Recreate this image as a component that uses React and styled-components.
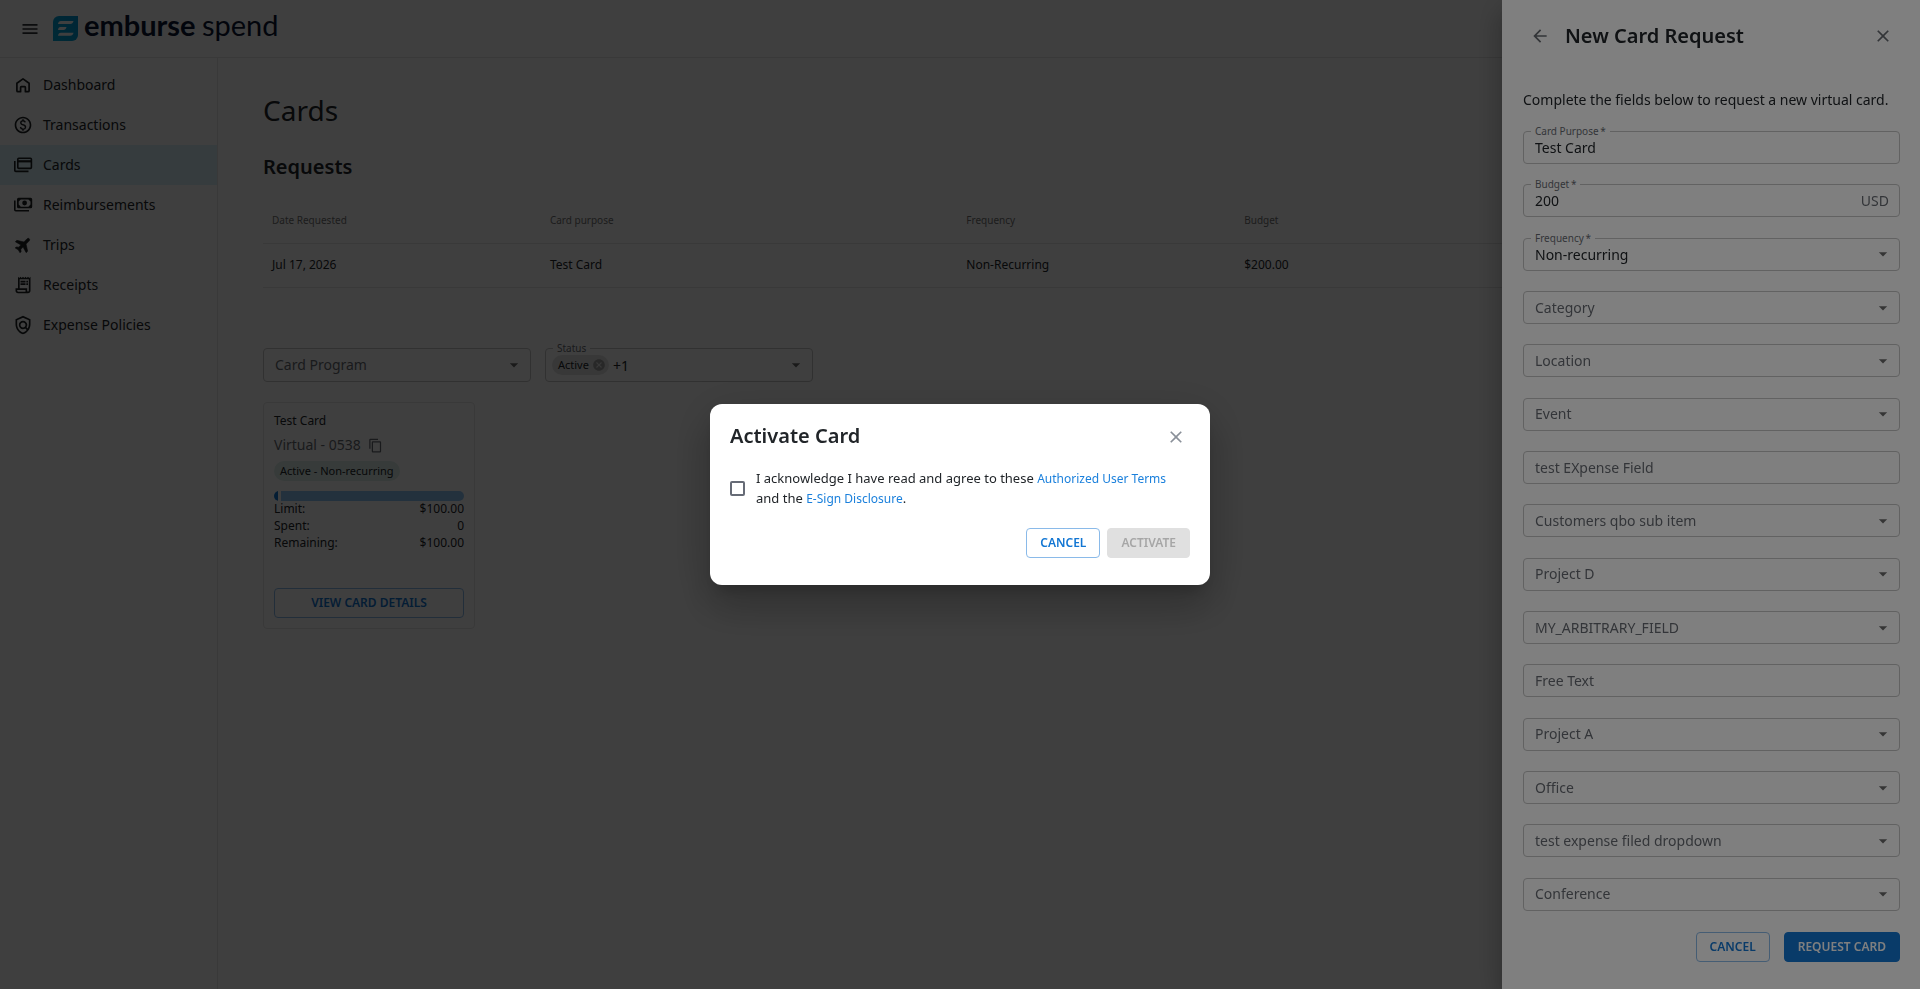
import React from "react";
import styled, { createGlobalStyle, css } from "styled-components";
import {
  MdArrowBack,
  MdCancel,
  MdClose,
  MdContentCopy,
  MdMenu,
  MdOutlinePaid,
  MdOutlinePolicy,
  MdOutlineReceiptLong,
} from "react-icons/md";

const blue = "#1276d3";
const blueBorder = "#8abae9";
const ink = "#212529";
const muted = "#676b72";
const line = "#e6e6e6";
const outline = "#c4c4c4";

const GlobalStyle = createGlobalStyle`
  *, *::before, *::after { box-sizing: border-box; }
  body {
    margin: 0;
    background: #fff;
    color: ${ink};
    font-family: "Noto Sans", "Liberation Sans", sans-serif;
    font-size: 14px;
  }
  button, input, select { font: inherit; color: inherit; }
  button { cursor: pointer; }
`;

/* ---------- shared parts ---------- */

const Button = styled.button`
  display: inline-flex;
  align-items: center;
  justify-content: center;
  height: 30px;
  padding: 0 13px;
  border: 1px solid ${blueBorder};
  border-radius: 4px;
  background: transparent;
  color: ${blue};
  font-size: 12px;
  font-weight: 600;
  line-height: 18px;
  text-transform: uppercase;
  white-space: nowrap;

  ${(p) =>
    p.$variant === "filled" &&
    css`
      border-color: ${blue};
      background: ${blue};
      color: #fff;
    `}

  &:disabled {
    border-color: #e0e0e0;
    background: #e0e0e0;
    color: #a6a6a6;
    cursor: default;
  }
`;

const IconButton = styled.button`
  display: inline-flex;
  align-items: center;
  justify-content: center;
  flex: none;
  width: ${(p) => p.$width || "28px"};
  height: 30px;
  padding: 0;
  border: 0;
  background: none;
  color: ${(p) => p.$color || ink};
  font-size: ${(p) => p.$size || "20px"};
`;

/* ---------- header ---------- */

const Page = styled.div`
  display: flex;
  flex-direction: column;
  min-height: 100vh;
`;

const Header = styled.header`
  display: flex;
  align-items: center;
  gap: 13px;
  height: 58px;
  padding: 0 20px;
  border-bottom: 1px solid ${line};
`;

const LogoLink = styled.a`
  display: flex;
  text-decoration: none;
`;

const LogoSvg = styled.svg`
  display: block;
  font-family: Lato, "Open Sans", sans-serif;
  font-size: 29px;
`;

function Logo() {
  return (
    <LogoLink href="#home" aria-label="emburse spend">
      <LogoSvg width="240" height="51" viewBox="0 0 240 51">
        <defs>
          <linearGradient id="mark" x1="0" y1="1" x2="1" y2="0">
            <stop offset="0" stopColor="#00a8d8" />
            <stop offset="1" stopColor="#0096d4" />
          </linearGradient>
        </defs>
        <path d="M6 13h19v19a6 6 0 0 1-6 6H0V19a6 6 0 0 1 6-6Z" fill="url(#mark)" />
        <g fill="#fff">
          <path d="M8 18h12.5c-.4 2-1.600 3-3.200 3H5c.2-2 1.300-3 3-3Z" />
          <path d="M7.500 23.900H13.500c-.4 2-1.500 3-3.100 3H5c.2-2 1-3 2.500-3Z" />
          <path d="M8 29.700h12.500c-.4 2-1.600 3-3.200 3H5c.2-2 1.300-3 3-3Z" />
        </g>
        <text x="31" y="33" fill="#0b1533" fontWeight="700">emburse</text>
        <text x="149" y="33" fill="#0b1533">spend</text>
      </LogoSvg>
    </LogoLink>
  );
}

/* ---------- sidebar ---------- */

const Body = styled.div`
  display: flex;
  flex: 1;
`;

const Sidebar = styled.nav`
  flex: none;
  width: 218px;
  padding-top: 7px;
  border-right: 1px solid ${line};
`;

const NavLink = styled.a`
  display: flex;
  align-items: center;
  gap: 10px;
  height: 40px;
  padding: 0 13px 1px;
  background: ${(p) => (p.$active ? "#d9f0f8" : "transparent")};
  color: ${ink};
  line-height: 20px;
  text-decoration: none;

  svg {
    flex: none;
    width: 20px;
    height: 20px;
    color: #1c2023;
  }
`;

function HomeIcon() {
  return (
    <svg viewBox="0 0 20 20" fill="none" stroke="currentColor" strokeWidth="1.7" strokeLinejoin="round">
      <path d="M3.900 8.300 10 3.900l6.100 4.400v7.400q0 1-1 1h-2.700v-4.300q0-.7-.7-.7H8.300q-.7 0-.7.7v4.300H4.900q-1 0-1-1Z" />
    </svg>
  );
}

function CardsIcon() {
  return (
    <svg viewBox="0 0 20 20" fill="none" stroke="currentColor" strokeWidth="1.600">
      <rect x="4.800" y="3.200" width="13.600" height="10.200" rx="1" />
      <path d="M5 6.300h13.200" strokeWidth="2.200" />
      <path d="M1.800 6v9.400q0 1 1 1h12.700" />
    </svg>
  );
}

function BanknotesIcon() {
  return (
    <svg viewBox="0 0 20 20" fill="none" stroke="currentColor" strokeWidth="1.600">
      <path
        d="M5.500 2.700h12.200q1.500 0 1.500 1.500v7.600q0 1.500-1.500 1.500H5.500Q4 13.300 4 11.800V4.200q0-1.500 1.500-1.500Zm2.300 1.700L5.700 6.400v3.200l2.100 2.100h7.600l2.100-2.100V6.400l-2.100-2Z"
        fill="currentColor"
        fillRule="evenodd"
        stroke="none"
      />
      <circle cx="11.600" cy="8" r="2.400" fill="currentColor" stroke="none" />
      <path d="M1.800 5.600v9.200q0 1 1 1h13.200" />
    </svg>
  );
}

function PlaneIcon() {
  return (
    <svg viewBox="0 0 20 20" fill="currentColor">
      <path
        d="M10 .2c1.100 0 1.700.9 1.700 2v4.700l6.800 4.300v2.300l-6.800-1.900v3.500l2.100 1.700v1.700L10 17.500l-3.800 1v-1.700l2.100-1.700v-3.500l-6.800 1.900v-2.300l6.800-4.300V2.200c0-1.100.6-2 1.700-2Z"
        stroke="currentColor"
        strokeWidth=".6"
        strokeLinejoin="round"
        transform="rotate(45 10 10) translate(1 1) scale(.9)"
      />
    </svg>
  );
}

const navItems = [
  { label: "Dashboard", Icon: HomeIcon },
  { label: "Transactions", Icon: MdOutlinePaid },
  { label: "Cards", Icon: CardsIcon, active: true },
  { label: "Reimbursements", Icon: BanknotesIcon },
  { label: "Trips", Icon: PlaneIcon },
  { label: "Receipts", Icon: MdOutlineReceiptLong },
  { label: "Expense Policies", Icon: MdOutlinePolicy },
];

/* ---------- main content ---------- */

const Main = styled.main`
  flex: 1;
  min-width: 0;
  padding: 33px 46px 46px 45px;
`;

const PageTitle = styled.h1`
  margin: 0 0 24px;
  font-size: 28px;
  font-weight: 400;
  line-height: 38px;
`;

const SectionTitle = styled.h2`
  margin: 0 0 19px;
  font-size: 20px;
  font-weight: 600;
  line-height: 27px;
`;

const Table = styled.table`
  width: 100%;
  margin-bottom: 60px;
  border-collapse: separate;
  border-spacing: 0;
  table-layout: fixed;
`;

const Col = styled.col`
  width: ${(p) => p.$width || "auto"};
`;

const HeadCell = styled.th`
  height: 45px;
  padding: 0 9px 2px;
  border-bottom: 1px solid ${line};
  color: #737373;
  font-size: 10px;
  font-weight: 400;
  text-align: left;
`;

const Cell = styled.td`
  height: 44px;
  padding: 0 9px 2px;
  border-bottom: 1px solid ${line};
  font-size: 12px;
`;

const Filters = styled.div`
  display: flex;
  gap: 14px;
  margin-bottom: 20px;
`;

const Chip = styled.span`
  display: inline-flex;
  align-items: center;
  gap: 3px;
  height: 20px;
  padding: 0 ${(p) => (p.$removable ? "3px" : "6px")} 0 6px;
  border-radius: 10px;
  background: ${(p) => (p.$removable ? "#e3e3e3" : "#dcefea")};
  font-size: 11px;
  line-height: 16px;
`;

const CardTile = styled.article`
  display: flex;
  flex-direction: column;
  align-items: flex-start;
  width: 212px;
  padding: 9px 10px 10px;
  border: 1px solid ${line};
  border-radius: 4px;
`;

const CardName = styled.h3`
  margin: 0 0 5px;
  font-size: 12px;
  font-weight: 400;
  line-height: 18px;
`;

const CardNumber = styled.div`
  display: flex;
  align-items: center;
  gap: 1px;
  height: 20px;
  margin-bottom: 6px;
  color: ${muted};
  line-height: 20px;
`;

const UsageBar = styled.div`
  display: flex;
  gap: 3px;
  align-self: stretch;
  height: 10px;
  margin-top: 10px;
  border-radius: 5px;
  overflow: hidden;

  &::before {
    content: "";
    width: 4px;
    background: ${blue};
  }

  &::after {
    content: "";
    flex: 1;
    background: #8fc4f5;
  }
`;

const Amounts = styled.dl`
  display: grid;
  grid-template-columns: auto auto;
  row-gap: 2px;
  justify-content: space-between;
  align-self: stretch;
  margin: 0 0 38px;
  font-size: 12px;
  line-height: 15px;

  dt, dd { margin: 0; }
  dd { text-align: right; }
`;

const DetailsButton = styled(Button)`
  align-self: stretch;
`;

/* ---------- outlined form fields ---------- */

const FieldBox = styled.div`
  position: relative;
  display: flex;
  align-items: center;
  flex: none;
  width: ${(p) => p.$width || "100%"};
  height: ${(p) => p.$height || "33px"};
  border: 1px solid ${outline};
  border-radius: 4px;
`;

const FieldLabel = styled.label`
  position: absolute;
  left: 11px;
  color: ${muted};
  line-height: 20px;
  pointer-events: none;

  ${(p) =>
    p.$floating &&
    css`
      top: -8px;
      left: 7px;
      padding: 0 4px;
      background: #fff;
      font-size: 10px;
      line-height: 14px;
    `}
`;

const controlStyle = css`
  flex: 1;
  min-width: 0;
  height: 100%;
  padding: 0 11px;
  border: 0;
  outline: 0;
  background: transparent;
  appearance: none;
  font-size: 14px;
`;

const TextInput = styled.input`
  ${controlStyle}
`;

const Select = styled.select`
  ${controlStyle}
  padding-right: 30px;
`;

const Arrow = styled.svg`
  position: absolute;
  right: 6px;
  width: 20px;
  height: 20px;
  fill: #6b6b6b;
  pointer-events: none;
`;

const Adornment = styled.span`
  padding-right: 10px;
  color: ${muted};
`;

const ArrowIcon = () => (
  <Arrow viewBox="0 0 24 24">
    <path d="M7 10l5 5 5-5z" />
  </Arrow>
);

const Selected = styled.div`
  display: flex;
  align-items: center;
  gap: 4px;
  padding-left: 6px;
`;

function Field({ id, label, value, kind = "select", required, suffix, width, height }) {
  return (
    <FieldBox $width={width} $height={height}>
      {kind === "select" ? (
        <Select id={id} defaultValue={value || ""} required={required}>
          <option value="" aria-label="None" />
          {value && <option>{value}</option>}
        </Select>
      ) : (
        <TextInput id={id} defaultValue={value || ""} required={required} />
      )}
      {suffix && <Adornment>{suffix}</Adornment>}
      <FieldLabel htmlFor={id} $floating={Boolean(value)}>
        {label}
        {required && "\u2009*"}
      </FieldLabel>
      {kind === "select" && <ArrowIcon />}
    </FieldBox>
  );
}

/* ---------- drawer ---------- */

const Backdrop = styled.div`
  position: fixed;
  inset: 0;
  background: rgba(0, 0, 0, 0.5);
`;

const Drawer = styled.aside`
  position: fixed;
  top: 0;
  right: 0;
  bottom: 0;
  display: flex;
  flex-direction: column;
  width: 418px;
  max-width: 100%;
  padding: 21px 20px 27px 21px;
  overflow-y: auto;
  background: #fff;
  box-shadow:
    0 8px 10px -5px rgba(0, 0, 0, 0.2),
    0 16px 24px 2px rgba(0, 0, 0, 0.14),
    0 6px 30px 5px rgba(0, 0, 0, 0.12);
`;

const DrawerHeader = styled.header`
  display: flex;
  align-items: center;
  gap: 8px;
  margin-bottom: 39px;
`;

const PanelTitle = styled.h2`
  flex: 1;
  margin: 0;
  font-size: 20px;
  font-weight: 600;
  line-height: 28px;
`;

const Intro = styled.p`
  margin: 0 0 21px;
  line-height: 20px;
`;

const Fields = styled.div`
  display: flex;
  flex: 1 0 auto;
  flex-direction: column;
  justify-content: space-between;
  gap: 16px;
`;

const DrawerFooter = styled.footer`
  display: flex;
  justify-content: flex-end;
  gap: 14px;
  margin-top: 21px;
`;

const requestFields = [
  { label: "Card Purpose", value: "Test Card", kind: "text", required: true },
  { label: "Budget", value: "200", kind: "text", required: true, suffix: "USD" },
  { label: "Frequency", value: "Non-recurring", required: true },
  { label: "Category" },
  { label: "Location" },
  { label: "Event" },
  { label: "test EXpense Field", kind: "text" },
  { label: "Customers qbo sub item" },
  { label: "Project D" },
  { label: "MY_ARBITRARY_FIELD" },
  { label: "Free Text", kind: "text" },
  { label: "Project A" },
  { label: "Office" },
  { label: "test expense filed dropdown" },
  { label: "Conference" },
];

/* ---------- dialog ---------- */

const ModalLayer = styled(Backdrop)`
  display: flex;
  align-items: center;
  justify-content: center;
  padding: 20px;
`;

const Modal = styled.section`
  width: 500px;
  max-width: 100%;
  padding: 18px 20px 27px;
  border-radius: 12px;
  background: #fff;
  box-shadow:
    0 11px 15px -7px rgba(0, 0, 0, 0.2),
    0 24px 38px 3px rgba(0, 0, 0, 0.14),
    0 9px 46px 8px rgba(0, 0, 0, 0.12);
`;

const ModalHeader = styled.header`
  display: flex;
  align-items: flex-start;
  margin-bottom: 16px;
`;

const Acknowledge = styled.div`
  display: flex;
  align-items: center;
  gap: 11px;
  margin-bottom: 20px;
  font-size: 13px;
  line-height: 20px;
`;

const Checkbox = styled.input`
  flex: none;
  width: 15px;
  height: 15px;
  margin: 0;
  border: 2px solid #666b76;
  border-radius: 2px;
  background: #fff;
  appearance: none;

  &:checked { background: ${blue}; }
`;

const TermsLabel = styled.label`
  flex: 1;
  padding-right: 20px;
`;

const TextLink = styled.a`
  color: #1b80dc;
  font-size: 12px;
  line-height: 16px;
  text-decoration: none;
`;

const ModalActions = styled.footer`
  display: flex;
  justify-content: flex-end;
  gap: 7px;
`;

/* ---------- app ---------- */

export default function App() {
  return (
    <>
      <GlobalStyle />
      <Page>
        <Header>
          <IconButton aria-label="Menu" $width="20px" $color="#2c3035">
            <MdMenu />
          </IconButton>
          <Logo />
        </Header>
        <Body>
          <Sidebar>
            {navItems.map(({ label, Icon, active }) => (
              <NavLink key={label} href={`#${label}`} $active={active}>
                <Icon />
                {label}
              </NavLink>
            ))}
          </Sidebar>
          <Main>
            <PageTitle>Cards</PageTitle>
            <SectionTitle>Requests</SectionTitle>
            <Table>
              <colgroup>
                <Col $width="17.25%" />
                <Col $width="25.85%" />
                <Col $width="17.25%" />
                <Col />
              </colgroup>
              <thead>
                <tr>
                  <HeadCell>Date Requested</HeadCell>
                  <HeadCell>Card purpose</HeadCell>
                  <HeadCell>Frequency</HeadCell>
                  <HeadCell>Budget</HeadCell>
                </tr>
              </thead>
              <tbody>
                <tr>
                  <Cell>Jul 17, 2026</Cell>
                  <Cell>Test Card</Cell>
                  <Cell>Non-Recurring</Cell>
                  <Cell>$200.00</Cell>
                </tr>
              </tbody>
            </Table>

            <Filters>
              <Field id="card-program" label="Card Program" width="268px" height="34px" />
              <FieldBox $width="268px" $height="34px">
                <Selected>
                  <Chip $removable>
                    Active
                    <IconButton aria-label="Remove Active" $width="14px" $size="14px" $color="#a3a3a3">
                      <MdCancel />
                    </IconButton>
                  </Chip>
                  +1
                </Selected>
                <TextInput id="status" role="combobox" aria-expanded="false" />
                <FieldLabel htmlFor="status" $floating>
                  Status
                </FieldLabel>
                <ArrowIcon />
              </FieldBox>
            </Filters>

            <CardTile>
              <CardName>Test Card</CardName>
              <CardNumber>
                Virtual - 0538
                <IconButton aria-label="Copy card number" $size="15px" $color={muted}>
                  <MdContentCopy />
                </IconButton>
              </CardNumber>
              <Chip>Active - Non-recurring</Chip>
              <UsageBar />
              <Amounts>
                <dt>Limit:</dt>
                <dd>$100.00</dd>
                <dt>Spent:</dt>
                <dd>0</dd>
                <dt>Remaining:</dt>
                <dd>$100.00</dd>
              </Amounts>
              <DetailsButton>View Card Details</DetailsButton>
            </CardTile>
          </Main>
        </Body>
      </Page>

      <Backdrop />
      <Drawer aria-label="New Card Request">
        <DrawerHeader>
          <IconButton aria-label="Back" $width="34px" $color="#666a70">
            <MdArrowBack />
          </IconButton>
          <PanelTitle>New Card Request</PanelTitle>
          <IconButton aria-label="Close" $width="34px" $color="#666a70">
            <MdClose />
          </IconButton>
        </DrawerHeader>
        <Intro>Complete the fields below to request a new virtual card.</Intro>
        <Fields>
          {requestFields.map((field, i) => (
            <Field key={field.label} id={`request-field-${i}`} {...field} />
          ))}
        </Fields>
        <DrawerFooter>
          <Button>Cancel</Button>
          <Button $variant="filled">Request Card</Button>
        </DrawerFooter>
      </Drawer>

      <ModalLayer>
        <Modal role="dialog" aria-modal="true" aria-labelledby="activate-title">
          <ModalHeader>
            <PanelTitle id="activate-title">Activate Card</PanelTitle>
            <IconButton aria-label="Close dialog" $color="#8a9099">
              <MdClose />
            </IconButton>
          </ModalHeader>
          <Acknowledge>
            <Checkbox type="checkbox" id="acknowledge" />
            <TermsLabel htmlFor="acknowledge">
              I acknowledge I have read and agree to these{" "}
              <TextLink href="#terms">Authorized User Terms</TextLink> and the{" "}
              <TextLink href="#disclosure">E-Sign Disclosure</TextLink>.
            </TermsLabel>
          </Acknowledge>
          <ModalActions>
            <Button>Cancel</Button>
            <Button disabled>Activate</Button>
          </ModalActions>
        </Modal>
      </ModalLayer>
    </>
  );
}
